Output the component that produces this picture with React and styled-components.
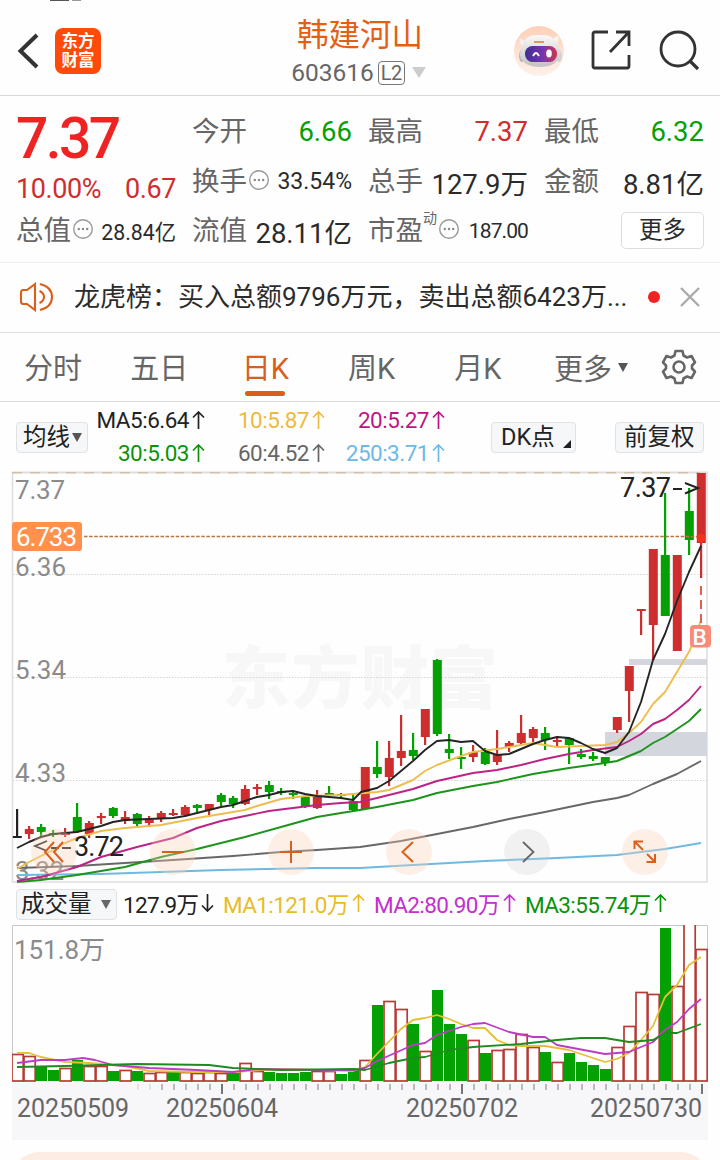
import styled, { createGlobalStyle } from "styled-components";

const RED = "#cf2e2e";
const GREEN = "#04a004";
const ORANGE = "#d8601c";

// body top, body bottom, high, low, direction
const candles = [
  [836, 838, 809, 838, "n"],
  [829, 834, 826, 839, "u"],
  [827, 832, 824, 837, "d"],
  [833, 835, 830, 837, "d"],
  [832, 835, 828, 837, "u"],
  [817, 832, 803, 833, "d"],
  [823, 834, 821, 838, "u"],
  [816, 818, 813, 824, "u"],
  [808, 816, 807, 818, "d"],
  [817, 821, 811, 824, "u"],
  [814, 824, 813, 826, "d"],
  [820, 823, 816, 827, "u"],
  [813, 819, 811, 822, "u"],
  [813, 815, 809, 816, "u"],
  [807, 815, 805, 817, "u"],
  [805, 808, 804, 813, "d"],
  [804, 810, 804, 817, "u"],
  [795, 802, 793, 806, "d"],
  [798, 804, 796, 808, "d"],
  [789, 804, 785, 805, "u"],
  [787, 789, 784, 795, "u"],
  [785, 792, 781, 799, "d"],
  [791, 793, 788, 795, "d"],
  [793, 795, 791, 799, "d"],
  [797, 806, 795, 808, "d"],
  [796, 808, 790, 809, "u"],
  [793, 795, 786, 795, "d"],
  [794, 796, 793, 799, "d"],
  [801, 810, 795, 811, "d"],
  [767, 809, 767, 809, "u"],
  [767, 774, 741, 778, "d"],
  [758, 777, 741, 786, "u"],
  [751, 758, 715, 766, "u"],
  [750, 756, 733, 760, "d"],
  [709, 737, 709, 745, "u"],
  [660, 734, 659, 736, "d"],
  [749, 753, 734, 759, "d"],
  [757, 759, 747, 769, "d"],
  [752, 757, 745, 762, "u"],
  [752, 764, 748, 765, "d"],
  [755, 762, 730, 765, "u"],
  [743, 747, 741, 752, "u"],
  [733, 743, 715, 745, "u"],
  [729, 738, 727, 742, "u"],
  [733, 740, 727, 750, "d"],
  [740, 742, 736, 746, "u"],
  [738, 745, 738, 764, "d"],
  [754, 757, 749, 759, "d"],
  [756, 759, 752, 761, "d"],
  [757, 763, 757, 766, "d"],
  [717, 730, 717, 733, "u"],
  [666, 691, 666, 722, "u"],
  [609, 611, 609, 635, "u"],
  [549, 625, 549, 660, "u"],
  [555, 616, 493, 616, "d"],
  [555, 651, 555, 651, "u"],
  [511, 540, 488, 555, "d"],
  [473, 543, 473, 578, "u"],
];

const volumeTops = [
  1054, 1056, 1066, 1070, 1068, 1060, 1066, 1066, 1071, 1070, 1071, 1073, 1072,
  1072, 1072, 1073, 1072, 1073, 1073, 1063, 1071, 1072, 1073, 1073, 1072, 1071,
  1071, 1074, 1070, 1060, 1005, 1001, 1009, 1024, 1051, 990, 1024, 1034, 1040,
  1053, 1050, 1049, 1034, 1047, 1052, 1062, 1053, 1062, 1065, 1069, 1047, 1026,
  992, 994, 928, 986, 910, 949,
];

const volumeDown = [
  2, 3, 5, 8, 10, 13, 18, 21, 22, 23, 24, 27, 28, 30, 33, 35, 36, 37, 39, 44,
  46, 47, 48, 49, 54,
];

const priceLines = [
  {
    color: "#6fb9e3",
    points:
      "17,875 101,874 221,870 317,868 360,868 413,865 485,861 557,858 617,855 665,849 701,843",
  },
  {
    color: "#686868",
    points:
      "17,868 77,866 125,863 173,860 233,856 281,852 317,850 360,847 401,841 437,834 473,827 509,819 545,812 593,802 617,798 629,795 653,784 677,774 701,761",
  },
  {
    color: "#1c941c",
    points:
      "17,882 41,880 77,875 125,867 161,857 197,849 245,837 281,827 317,817 341,813 360,810 377,807 413,800 437,793 473,786 497,782 533,774 569,768 605,763 617,761 641,751 653,743 665,737 689,721 701,709",
  },
  {
    color: "#bd2384",
    points:
      "17,881 41,877 77,867 101,857 137,847 173,838 197,828 221,821 245,816 269,811 293,808 317,805 341,803 360,802 377,798 389,795 413,789 437,781 473,773 497,770 521,765 545,759 569,754 593,750 617,747 629,741 641,734 653,724 665,719 677,710 689,700 701,686",
  },
  {
    color: "#edbd4e",
    points:
      "17,869 29,862 41,856 53,850 65,843 77,838 101,831 125,828 161,825 197,818 233,812 245,810 257,806 281,799 305,796 341,795 353,794 377,792 389,790 413,780 425,771 437,765 461,756 473,752 497,749 521,745 533,743 557,747 581,746 605,745 617,742 629,733 641,722 653,704 665,692 677,672 690,650 701,620",
  },
  {
    color: "#242424",
    points:
      "17,848 29,842 41,837 53,834 77,832 89,829 101,826 113,822 125,820 149,819 173,818 185,816 209,810 221,807 233,805 257,797 269,795 281,792 293,791 305,794 317,796 341,798 353,800 361,792 377,788 389,781 401,771 413,761 425,750 437,741 449,740 461,742 473,741 485,751 497,755 509,754 521,749 533,744 545,740 557,737 569,738 581,743 593,749 605,753 617,748 629,732 641,702 653,660 665,634 677,601 689,572 701,546",
  },
];

const volumeLines = [
  {
    color: "#e7bf35",
    points:
      "17,1053 29,1053 41,1057 65,1062 89,1063 125,1066 149,1071 197,1072 233,1072 281,1069 317,1070 353,1071 365,1067 377,1054 401,1029 413,1020 425,1018 437,1015 449,1019 461,1024 473,1028 485,1028 497,1040 509,1045 521,1046 545,1046 569,1050 581,1054 605,1062 617,1059 629,1053 641,1040 653,1026 665,997 677,985 689,965 701,957",
  },
  {
    color: "#bd3cc4",
    points:
      "17,1063 41,1060 65,1060 83,1058 95,1060 113,1065 149,1068 197,1070 233,1072 257,1069 317,1070 353,1070 365,1068 377,1061 413,1045 425,1043 437,1035 461,1027 473,1024 485,1023 509,1032 533,1037 545,1037 557,1045 605,1054 629,1052 653,1042 665,1030 677,1022 689,1009 701,999",
  },
  {
    color: "#1f8a1f",
    points:
      "17,1067 65,1066 101,1065 137,1064 209,1065 233,1068 281,1070 353,1069 365,1070 389,1063 413,1058 425,1057 449,1050 473,1047 521,1044 557,1040 581,1038 605,1038 629,1042 653,1040 665,1033 677,1033 701,1024",
  },
];

const xAt = (i) => 17.5 + i * 12;

function Arrow({ down }) {
  return (
    <svg width="13" height="18" viewBox="0 0 13 18">
      <path
        d={down ? "M6.5 0V17M1 11.5L6.5 17L12 11.5" : "M6.5 18V1M1 6.5L6.5 1L12 6.5"}
        fill="none"
        stroke="currentColor"
        strokeWidth="1.7"
      />
    </svg>
  );
}

function Dots() {
  return (
    <svg width="22" height="22" viewBox="0 0 22 22">
      <circle cx="11" cy="11" r="9.3" fill="none" stroke="#999" strokeWidth="1.4" />
      <circle cx="6.8" cy="11" r="1.2" fill="#888" />
      <circle cx="11" cy="11" r="1.2" fill="#888" />
      <circle cx="15.2" cy="11" r="1.2" fill="#888" />
    </svg>
  );
}

function Robot() {
  return (
    <svg width="50" height="50" viewBox="0 0 50 50">
      <defs>
        <linearGradient id="peach" x1="0" y1="0" x2="0" y2="1">
          <stop offset="0" stopColor="#fdd0b8" />
          <stop offset="1" stopColor="#fdf1ea" />
        </linearGradient>
        <linearGradient id="shell" x1="0" y1="0" x2="0" y2="1">
          <stop offset="0" stopColor="#fbf8f7" />
          <stop offset="1" stopColor="#c3c0c6" />
        </linearGradient>
        <linearGradient id="visor" x1="0" y1="0" x2="1" y2="0">
          <stop offset="0" stopColor="#3e2f92" />
          <stop offset="0.55" stopColor="#7735ae" />
          <stop offset="1" stopColor="#cf3550" />
        </linearGradient>
      </defs>
      <circle cx="25" cy="25" r="25" fill="url(#peach)" />
      <path d="M8 22L6 15Q5 11 9 14L14 17ZM35 15L43 10Q46 10 44 15L42 22Z" fill="#f7f3f2" />
      <ellipse cx="8" cy="30" rx="3" ry="6" fill="#b6b4ba" />
      <ellipse cx="45" cy="30" rx="3" ry="6" fill="#d5d2d6" />
      <path d="M6 29Q7 9 23 9H30Q45 10 46 29Q44 40 27 41Q8 41 6 29Z" fill="url(#shell)" />
      <path d="M20 15H30V17H20Z" fill="#d79a68" />
      <rect x="11" y="20" width="32" height="16" rx="7.5" fill="url(#visor)" />
      <path d="M19 30Q22 24 25 30" fill="none" stroke="#fff" strokeWidth="1.8" />
      <ellipse cx="35" cy="27.5" rx="2.8" ry="4" fill="#fff" />
    </svg>
  );
}

function PriceChart() {
  return (
    <ChartSvg width="696" height="411" viewBox="12 472 696 411">
      <text x="222" y="703" fontSize="68" fontWeight="900" textLength="276" fill="#f7f7f7">
        东方财富
      </text>
      <path d="M12.5 472V882M12 882H708M707 472V882" stroke="#dedfe1" strokeWidth="1.6" fill="none" />
      <path d="M12 472.5H708" stroke="#dedede" strokeWidth="2" />
      <path d="M12 472.8H700" stroke="#cfb28c" strokeDasharray="10 8" />
      {[574.5, 677.5, 780.5].map((y) => (
        <path key={y} d={`M13 ${y}H707`} stroke="#d4d4d4" strokeDasharray="1.5 1.5" />
      ))}
      <rect x="629" y="659" width="78" height="6" fill="#d3d6dc" />
      <rect x="605" y="732" width="102" height="24" fill="#d3d6dc" />
      <g fill="#8b8b8b" fontSize="26">
        <text x="15" y="499" textLength="50">7.37</text>
        <text x="15" y="576" textLength="51">6.36</text>
        <text x="15" y="679" textLength="51">5.34</text>
        <text x="15" y="782" textLength="51">4.33</text>
        <text x="15" y="880" textLength="49">3.32</text>
      </g>
      {candles.map(([top, bottom, high, low, dir], i) => {
        const color = dir === "u" ? RED : dir === "d" ? GREEN : "#222";
        return (
          <g key={i} fill={color}>
            <rect x={xAt(i) - 1.5} y={high} width="2.2" height={low - high} />
            <rect x={xAt(i) - 4.7} y={top} width="9" height={bottom - top} />
          </g>
        );
      })}
      {priceLines.map((line) => (
        <polyline
          key={line.color}
          points={line.points}
          fill="none"
          stroke={line.color}
          strokeWidth="1.9"
          strokeLinejoin="round"
        />
      ))}
      <path d="M84 536.5H706" stroke="#b9763c" strokeWidth="1.3" strokeDasharray="3.5 1.6" />
      <circle cx="701" cy="538" r="4.3" fill="#f8301c" />
      <rect x="12" y="522" width="70" height="29" rx="3" fill="#ff914d" />
      <text x="16" y="545.5" fontSize="26" fill="#fff" textLength="61">6.733</text>
      <path d="M701 586V625" stroke="#e2604f" strokeWidth="2" strokeDasharray="9 5" />
      <rect x="690" y="625" width="21" height="22.5" rx="4" fill="#f78a78" />
      <text x="692.5" y="644.5" fontSize="22.5" fontWeight="500" fill="#fff">B</text>
      <text x="620" y="497" fontSize="27" fill="#222" textLength="51">7.37</text>
      <path d="M673 489H682M685 483L698 488L685 493.5" fill="none" stroke="#222" strokeWidth="2" />
      <text x="74" y="855.5" fontSize="27" fill="#222" textLength="50">3.72</text>
      <path d="M47 841L35 846L47 851M51 848H59M62 848H71" fill="none" stroke="#222" strokeWidth="1.8" />
      {[54, 173, 291, 409, 645].map((x) => (
        <circle key={x} cx={x} cy="852" r="23" fill="#ffd0b5" fillOpacity="0.33" />
      ))}
      <circle cx="527" cy="852" r="23" fill="#cfcfcf" fillOpacity="0.27" />
      <g fill="none" stroke={ORANGE} strokeWidth="2">
        <path d="M54 842L45 852L54 862M63 842L54 852L63 862" />
        <path d="M162 852H184" />
        <path d="M280 852H302M291 841V863" />
        <path d="M413 842L402.5 852L413 862" />
        <path d="M634.5 849V841.5H643M634.5 841.5L643 850M655 854V862H646.5M655 862L647 854" />
      </g>
      <path d="M523 842L533.5 852L523 862" fill="none" stroke="#666" strokeWidth="1.8" />
    </ChartSvg>
  );
}

function VolumeChart() {
  return (
    <VolumeSvg width="696" height="158" viewBox="12 925 696 158">
      <path d="M12.5 1082V925.5H707.5V1082" fill="none" stroke="#c8c8c8" />
      <text x="14" y="959" fontSize="26" fill="#8b8b8b" textLength="91">151.8万</text>
      {volumeTops.map((top, i) =>
        volumeDown.includes(i) ? (
          <rect key={i} x={xAt(i) - 5.5} y={top} width="11" height={1081 - top} fill={GREEN} />
        ) : (
          <rect
            key={i}
            x={xAt(i) - 5.5}
            y={top + 0.5}
            width="11.2"
            height={1080.5 - top}
            fill="#fff"
            stroke="#b73a36"
            strokeWidth="1.7"
          />
        )
      )}
      {volumeLines.map((line) => (
        <polyline
          key={line.color}
          points={line.points}
          fill="none"
          stroke={line.color}
          strokeWidth="1.8"
          strokeLinejoin="round"
        />
      ))}
    </VolumeSvg>
  );
}

function DateAxis() {
  return (
    <ChartSvg width="696" height="57" viewBox="12 1083 696 57">
      <rect x="12" y="1083" width="696" height="57" fill="#f7f7fa" />
      {candles.map((_, i) => {
        if (i < 10) return null;
        const major = i === 17 || i === 37 || i === 57;
        return (
          <path
            key={i}
            d={`M${xAt(i) + 0.5} 1084V${major ? 1094 : 1090}`}
            stroke={major ? "#555" : i < 12 ? "#ddd" : "#aaa"}
            strokeWidth="1.6"
          />
        );
      })}
      <g fill="#666" fontSize="25">
        <text x="17" y="1117" textLength="112">20250509</text>
        <text x="166" y="1117" textLength="112">20250604</text>
        <text x="406" y="1117" textLength="112">20250702</text>
        <text x="590" y="1117" textLength="112">20250730</text>
      </g>
    </ChartSvg>
  );
}

export default function App() {
  return (
    <Page>
      <GlobalStyle />
      <StatusStrip>
        <StatusMark width={19} color="#555" />
        <StatusMark width={9} color="#999" />
      </StatusStrip>
      <Header>
        <HeaderLeft>
          <svg width="23" height="36" viewBox="0 0 23 36">
            <path d="M20 2L3.5 18L20 34" fill="none" stroke="#333" strokeWidth="4" />
          </svg>
          <Logo>
            <span>东方</span>
            <span>财富</span>
          </Logo>
        </HeaderLeft>
        <Title>
          <h1>韩建河山</h1>
          <Code>
            603616<Level>L2</Level>
            <Triangle size={7.5} height={11} color="#ccc" />
          </Code>
        </Title>
        <HeaderRight>
          <Robot />
          <svg width="41" height="41" viewBox="0 0 41 41">
            <path
              d="M17 2H4Q2 2 2 4V36Q2 38 4 38H36Q38 38 38 36V25M25 2H38V16M38 2L19 22"
              fill="none"
              stroke="#333"
              strokeWidth="2.8"
            />
          </svg>
          <svg width="41" height="41" viewBox="0 0 41 41">
            <circle cx="19" cy="19" r="17" fill="none" stroke="#333" strokeWidth="2.8" />
            <path d="M31 31L39 39" stroke="#333" strokeWidth="3.2" />
          </svg>
        </HeaderRight>
      </Header>
      <Quote>
        <PriceCell>
          <Price>7.37</Price>
          <Change>
            <span>10.00%</span>
            <span>0.67</span>
          </Change>
        </PriceCell>
        <Cell>
          <Label>今开</Label>
          <Value color={GREEN}>6.66</Value>
        </Cell>
        <Cell>
          <Label>最高</Label>
          <Value color={RED}>7.37</Value>
        </Cell>
        <Cell>
          <Label>最低</Label>
          <Value color={GREEN}>6.32</Value>
        </Cell>
        <Cell>
          <Label>换手<Dots /></Label>
          <Value size={23}>33.54%</Value>
        </Cell>
        <Cell>
          <Label>总手</Label>
          <Value>127.9万</Value>
        </Cell>
        <Cell>
          <Label>金额</Label>
          <Value>8.81亿</Value>
        </Cell>
        <Cell>
          <Label>总值<Dots /></Label>
          <Value size={21.3}>28.84亿</Value>
        </Cell>
        <Cell>
          <Label>流值</Label>
          <Value>28.11亿</Value>
        </Cell>
        <Cell>
          <Label>
            市盈<sup>动</sup>
            <Dots />
          </Label>
          <Value size={21} $spacing={-0.9}>187.00</Value>
        </Cell>
        <MoreCell>
          <MoreButton>更多</MoreButton>
        </MoreCell>
      </Quote>
      <Notice>
        <svg width="35" height="30" viewBox="0 0 35 30">
          <g fill="none" stroke={ORANGE} strokeWidth="2.1">
            <path d="M16 2L8 8H4Q2 8 2 11V19Q2 22 4 22H8L16 28Z" />
            <path d="M20.5 9Q25 11 25 15T20.5 21" />
            <path d="M21 2Q33 5 33 15T21 28" />
          </g>
        </svg>
        <p>龙虎榜：买入总额9796万元，卖出总额6423万...</p>
        <RedDot />
        <svg width="22" height="22" viewBox="0 0 22 22">
          <path d="M2 2L20 20M20 2L2 20" stroke="#aaa" strokeWidth="2.4" />
        </svg>
      </Notice>
      <Tabs>
        {["分时", "五日", "日K", "周K", "月K"].map((name) => (
          <Tab key={name} $active={name === "日K"}>
            {name}
          </Tab>
        ))}
        <MoreTab>
          更多
          <Triangle size={5} height={9} color="#555" />
        </MoreTab>
        <svg width="36" height="36" viewBox="0 0 36 36">
          <g fill="none" stroke="#666" strokeWidth="2.6" strokeLinejoin="round">
            <path d="M14.5 2H21.5L22.5 6.5L26 8.5L30.5 7L34 13.3L31 16.5V19.5L34 22.7L30.5 29L26 27.5L22.5 29.5L21.5 34H14.5L13.5 29.5L10 27.5L5.5 29L2 22.7L5 19.5V16.5L2 13.3L5.5 7L10 8.5L13.5 6.5Z" />
            <circle cx="18" cy="18" r="5.5" />
          </g>
        </svg>
      </Tabs>
      <Averages>
        <Chip width={72}>
          均线
          <Triangle size={5} height={9} color="#555" />
        </Chip>
        <AverageGrid>
          <Average color="#222">MA5:6.64<Arrow /></Average>
          <Average color="#edb93f">10:5.87<Arrow /></Average>
          <Average color="#bd1684">20:5.27<Arrow /></Average>
          <Average color="#0a930a">30:5.03<Arrow /></Average>
          <Average color="#666">60:4.52<Arrow /></Average>
          <Average color="#6cb9e8">250:3.71<Arrow /></Average>
        </AverageGrid>
        <Chip width={85} $inset={9}>
          DK点
          <Corner width="8" height="8" viewBox="0 0 8 8">
            <path d="M8 0V8H0Z" fill="#222" />
          </Corner>
        </Chip>
        <LastChip width={89} $inset={8}>前复权</LastChip>
      </Averages>
      <PriceChart />
      <VolumeBar>
        <Chip width={101} $inset={4}>
          成交量
          <Triangle size={5.5} height={9} color="#666" />
        </Chip>
        <VolumeValue width={100} color="#222">127.9万<Arrow down /></VolumeValue>
        <VolumeValue width={151} color="#e6bd28">MA1:121.0万<Arrow /></VolumeValue>
        <VolumeValue width={151} color="#c42fcf">MA2:80.90万<Arrow /></VolumeValue>
        <VolumeValue width={151} color="#0a930a">MA3:55.74万<Arrow /></VolumeValue>
      </VolumeBar>
      <VolumeChart />
      <DateAxis />
      <BottomCard />
    </Page>
  );
}

const GlobalStyle = createGlobalStyle`
  * {
    box-sizing: border-box;
  }
  body {
    margin: 0;
    background-color: #ffffff;
    font-family: Roboto, "Noto Sans CJK SC", sans-serif;
  }
`;

const Page = styled.div`
  width: 720px;
  height: 1160px;
  overflow: hidden;
  background-color: #fefefe;
  color: #2b2b2b;
  display: flex;
  flex-direction: column;
  svg {
    flex-shrink: 0;
  }
`;

const StatusStrip = styled.div`
  height: 6px;
  flex-shrink: 0;
  padding-left: 50px;
  display: flex;
  gap: 3px;
`;

const StatusMark = styled.div`
  width: ${(props) => props.width}px;
  height: 1px;
  background-color: ${(props) => props.color};
`;

const Header = styled.header`
  height: 90px;
  flex-shrink: 0;
  padding: 0 20px 0 17px;
  display: grid;
  grid-template-columns: 1fr auto 1fr;
  align-items: center;
  border-bottom: 1px solid #d8d8d8;
`;

const HeaderLeft = styled.div`
  display: flex;
  align-items: center;
  gap: 15px;
`;

const Logo = styled.div`
  width: 46px;
  height: 46px;
  border-radius: 8px;
  background-color: #ff4a0a;
  color: #ffffff;
  font-size: 16.5px;
  font-weight: 700;
  line-height: 19px;
  display: flex;
  flex-direction: column;
  align-items: center;
  justify-content: center;
`;

const Title = styled.div`
  padding-top: 3px;
  display: flex;
  flex-direction: column;
  align-items: center;
  h1 {
    margin: 0 0 -1px 3px;
    color: #e45f12;
    font-size: 31.5px;
    font-weight: 400;
    line-height: 42px;
  }
`;

const Code = styled.div`
  display: flex;
  align-items: center;
  color: #666666;
  font-size: 24.5px;
  line-height: 34px;
`;

const Level = styled.span`
  width: 27px;
  height: 24px;
  margin: 0 7px 0 4px;
  border: 1.5px solid #777777;
  border-radius: 4px;
  font-size: 20px;
  line-height: 22px;
  letter-spacing: -0.5px;
  text-align: center;
`;

const Triangle = styled.i`
  width: 0;
  height: 0;
  border-left: ${(props) => props.size}px solid transparent;
  border-right: ${(props) => props.size}px solid transparent;
  border-top: ${(props) => props.height}px solid ${(props) => props.color};
`;

const HeaderRight = styled.div`
  display: flex;
  align-items: center;
  justify-content: flex-end;
  gap: 27px;
`;

const Quote = styled.section`
  height: 166px;
  flex-shrink: 0;
  padding: 11px 16px 0;
  display: grid;
  grid-template-columns: repeat(4, 160px);
  grid-template-rows: 50px 50px 48px;
  column-gap: 16px;
`;

const Cell = styled.div`
  display: flex;
  align-items: center;
  justify-content: space-between;
  white-space: nowrap;
`;

const Label = styled.span`
  display: flex;
  align-items: center;
  color: #666666;
  font-size: 27.5px;
  line-height: 40px;
  sup {
    align-self: flex-start;
    margin-right: 1px;
    font-size: 14px;
    line-height: 14px;
  }
  svg {
    margin: -5px 0 0 1px;
  }
  sup + svg {
    margin-left: 0;
  }
`;

const Value = styled.span`
  margin-top: -1px;
  color: ${(props) => props.color || "#2b2b2b"};
  font-size: ${(props) => props.size || 27.5}px;
  letter-spacing: ${(props) => props.$spacing || 0}px;
`;

const PriceCell = styled.div`
  grid-row: span 2;
  margin-top: -2px;
  display: flex;
  flex-direction: column;
`;

const Price = styled.div`
  color: #ee2424;
  font-size: 57px;
  font-weight: 500;
  line-height: 68px;
  letter-spacing: -2.6px;
`;

const Change = styled.div`
  margin-top: 1px;
  display: flex;
  justify-content: space-between;
  color: ${RED};
  font-size: 27px;
  line-height: 30px;
  letter-spacing: -0.4px;
`;

const MoreCell = styled.div`
  display: flex;
  align-items: center;
  justify-content: flex-end;
`;

const MoreButton = styled.button`
  width: 83px;
  height: 37px;
  margin-top: -2px;
  padding: 0;
  border: 1px solid #dddddd;
  border-radius: 5px;
  background-color: #ffffff;
  color: #2b2b2b;
  font-family: inherit;
  font-size: 23.5px;
  line-height: 32px;
`;

const Notice = styled.section`
  height: 71px;
  flex-shrink: 0;
  padding-left: 19px;
  display: flex;
  align-items: center;
  border-top: 1px solid #eeeeee;
  border-bottom: 1px solid #dcdcdc;
  p {
    width: 553px;
    margin: -2px 21px 0 20px;
    font-size: 26px;
    line-height: 40px;
    white-space: nowrap;
  }
  svg {
    margin-top: -2px;
  }
`;

const RedDot = styled.i`
  width: 12px;
  height: 12px;
  margin: -2px 19px 0 0;
  border-radius: 50%;
  background-color: #f02222;
`;

const Tabs = styled.nav`
  height: 69px;
  flex-shrink: 0;
  display: flex;
  align-items: center;
  color: #666666;
  font-size: 29px;
  border-bottom: 1px solid #dcdcdc;
`;

const Tab = styled.div`
  width: 106.2px;
  height: 68px;
  color: ${(props) => (props.$active ? ORANGE : "#666666")};
  display: flex;
  flex-direction: column;
  align-items: center;
  line-height: 72px;
  &::after {
    content: "";
    width: 40px;
    height: 5px;
    margin-top: -14px;
    flex-shrink: 0;
    border-radius: 3px;
    background-color: ${(props) => (props.$active ? ORANGE : "transparent")};
  }
`;

const MoreTab = styled.div`
  width: 106px;
  margin: 0 1px 0 23px;
  display: flex;
  align-items: center;
  gap: 6px;
`;

const Averages = styled.section`
  height: 70px;
  flex-shrink: 0;
  padding: 0 16px;
  display: flex;
  align-items: center;
`;

const Chip = styled.div`
  position: relative;
  width: ${(props) => props.width}px;
  height: 31px;
  flex-shrink: 0;
  padding: 0 5px 0 ${(props) => props.$inset || 6}px;
  display: flex;
  align-items: center;
  justify-content: space-between;
  border: 1px solid #dfe2e5;
  border-radius: 4px;
  background-color: #f6f7f9;
  color: #222222;
  font-size: 23.5px;
  line-height: 29px;
  white-space: nowrap;
`;

const LastChip = styled(Chip)`
  margin-left: auto;
`;

const Corner = styled.svg`
  position: absolute;
  right: 4px;
  bottom: 4px;
`;

const AverageGrid = styled.div`
  width: 357px;
  margin: -2px 46px 0 0;
  display: grid;
  grid-template-columns: 117px 120px 120px;
  grid-auto-rows: 33px;
`;

const Average = styled.div`
  display: flex;
  align-items: center;
  justify-content: flex-end;
  gap: 3px;
  color: ${(props) => props.color};
  font-size: 22.5px;
  letter-spacing: -0.5px;
`;

const ChartSvg = styled.svg`
  display: block;
  margin-left: 12px;
  overflow: visible;
  font-family: Roboto, "Noto Sans CJK SC", sans-serif;
`;

// the tallest bar runs past the top of the frame
const VolumeSvg = styled(ChartSvg)`
  overflow: hidden;
`;

const VolumeBar = styled.section`
  height: 42px;
  flex-shrink: 0;
  padding-left: 16px;
  display: flex;
  align-items: center;
  ${Chip} {
    margin-right: 6px;
  }
`;

const VolumeValue = styled.div`
  width: ${(props) => props.width}px;
  margin-top: -3px;
  display: flex;
  align-items: center;
  gap: 3px;
  color: ${(props) => props.color};
  font-size: 22.5px;
  letter-spacing: -0.6px;
  white-space: nowrap;
`;

const BottomCard = styled.div`
  height: 60px;
  margin: 12px 10px 0;
  flex-shrink: 0;
  border-radius: 30px;
  background-color: #fcece3;
`;
